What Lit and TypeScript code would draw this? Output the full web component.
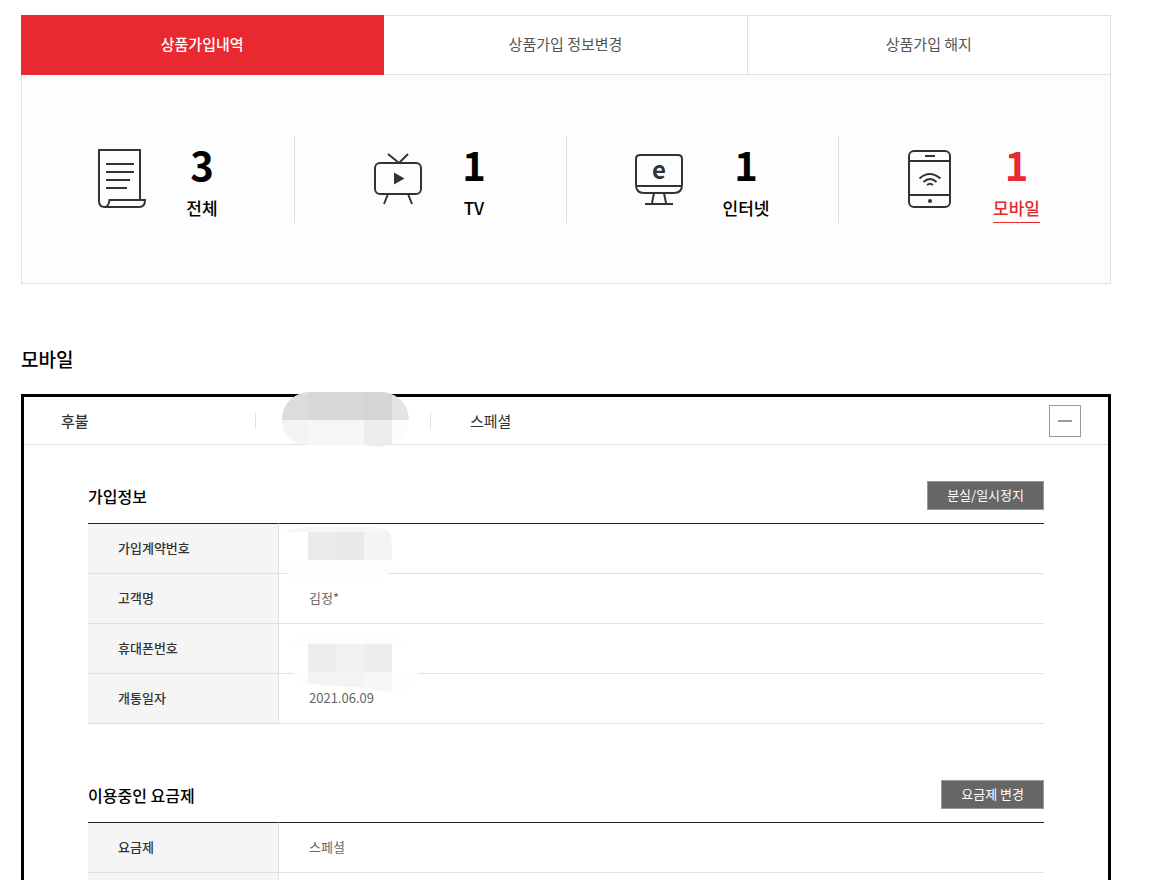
import { LitElement, html, svg, css } from "lit";
import { customElement, state } from "lit/decorators.js";

const docIcon = svg`
  <svg width="48" height="60" viewBox="0 0 48 60" aria-hidden="true">
    <path d="M1 52V1H42V51M1 52C1 56 3.5 58 6.500 58H41C44.500 58 47 55.500 47 51H11.500C11 55 9.500 58 6.500 58"/>
    <path d="M8 15H36M8 23H36M8 31H32M8 39H29"/>
  </svg>`;

const tvIcon = svg`
  <svg width="48" height="52" viewBox="0 0 48 52" aria-hidden="true">
    <rect x="1" y="10" width="46" height="31" rx="5"/>
    <path d="M14 1L25 10L34 1M14 41L10 51M34 41L38 51"/>
    <path class="solid" d="M20 19.500V31.500L30.500 25.500Z"/>
  </svg>`;

const monitorIcon = svg`
  <svg width="48" height="52" viewBox="0 0 48 52" aria-hidden="true">
    <path d="M5 2H43Q47 2 47 6V32Q47 40 39 40H9Q1 40 1 32V6Q1 2 5 2ZM1 33H47M19 40L17 50M29 40L31 50M10 51H38"/>
    <text x="24" y="26" text-anchor="middle">e</text>
  </svg>`;

const phoneIcon = svg`
  <svg width="45" height="58" viewBox="0 0 45 58" aria-hidden="true">
    <rect x="1" y="1" width="41" height="56" rx="5"/>
    <path d="M1 11H42M1 45H42M17 6H27"/>
    <path d="M11.500 28.500Q21.500 19.500 32.500 28.500M15.500 32Q22 26 28.500 32M19 35Q22 32.500 25 35"/>
    <circle class="solid" cx="22" cy="51" r="2"/>
  </svg>`;

@customElement("app-root")
export class AppRoot extends LitElement {
  @state() private tab = 0;
  @state() private open = true;

  private tabs = ["상품가입내역", "상품가입 정보변경", "상품가입 해지"];

  private stats = [
    { icon: docIcon, count: 3, label: "전체" },
    { icon: tvIcon, count: 1, label: "TV" },
    { icon: monitorIcon, count: 1, label: "인터넷" },
    { icon: phoneIcon, count: 1, label: "모바일", active: true },
  ];

  static styles = css`
    :host {
      display: block;
      padding: 15px 41px 0 21px;
      background: #fff;
      color: #000;
      font-family: "Noto Sans CJK KR", "Noto Sans", sans-serif;
      font-size: 15px;
    }
    * { box-sizing: border-box; }
    a { color: inherit; text-decoration: none; }
    button { font-family: inherit; cursor: pointer; }
    h2, h3 { margin: 0; font-weight: 500; }

    .tabs { display: grid; grid-template-columns: repeat(3, 1fr); }
    .tab {
      height: 60px;
      padding: 0 0 2px;
      border: 1px solid #e0e0e0;
      border-left: 0;
      background: #fff;
      color: #555;
      font-size: 15px;
      line-height: 24px;
    }
    .tab.on { border-color: #e8292f; background: #e8292f; color: #fff; font-weight: 500; }

    .stats {
      display: grid;
      grid-template-columns: repeat(4, 1fr);
      padding: 60px 0;
      border: 1px solid #e0e0e0;
      border-top: 0;
      background: #fdfdfd;
    }
    .stat { display: flex; align-items: center; justify-content: center; gap: 40px; }
    .stat + .stat { padding-right: 1px; border-left: 1px solid #e0e0e0; }
    .stat svg { overflow: visible; fill: none; stroke: #333; stroke-width: 2; }
    .stat svg .solid { fill: #333; stroke: none; }
    .stat svg text { fill: #333; stroke: none; font-size: 24px; line-height: 24px; font-weight: 700; }
    .figure { display: flex; flex-direction: column; align-items: center; font-weight: 500; }
    .count { font-size: 40px; font-weight: 700; line-height: 58px; }
    .name { font-size: 17px; line-height: 29px; border-bottom: 1px solid transparent; }
    .active { color: #e8292f; }
    .active .name { border-color: #e8292f; }

    .title { margin: 60px 0 20px; font-size: 19px; line-height: 30px; }
    .card { border: 3px solid #000; }
    .bar {
      display: grid;
      grid-template-columns: 231px 176px 1fr auto;
      align-items: center;
      height: 48px;
      padding-right: 27px;
      border-bottom: 1px solid #e0e0e0;
      color: #333;
      line-height: 24px;
    }
    .kind { padding-left: 37px; font-weight: 500; }
    .number { position: relative; height: 16px; border: solid #e0e0e0; border-width: 0 1px; }
    .plan { padding-left: 39px; }
    .mask { position: absolute; z-index: 1; }
    .mask-number { left: 26px; top: -21px; }
    .mask-contract { left: 0; top: 1px; }
    .mask-phone { left: 12px; top: 6px; }
    .toggle {
      display: grid;
      place-items: center;
      width: 32px;
      height: 32px;
      padding: 0;
      border: 1px solid #999;
      background: #fff;
    }
    .toggle svg { stroke: #999; stroke-width: 2; }

    .body { display: grid; gap: 56px; padding: 36px 64px 40px; }
    .head { display: flex; justify-content: space-between; align-items: center; margin-bottom: 13px; }
    .head h3 { font-size: 16px; line-height: 24px; }
    .action {
      height: 29px;
      padding: 0 19px 2px;
      border: 1px solid #999;
      background: #666;
      color: #fff;
      font-size: 13px;
      line-height: 20px;
    }
    table { width: 100%; border-spacing: 0; table-layout: fixed; font-size: 13px; line-height: 20px; }
    th, td { height: 50px; padding: 0 30px 2px; border-bottom: 1px solid #e0e0e0; text-align: left; }
    th { width: 191px; border-right: 1px solid #e0e0e0; background: #f5f5f5; color: #333; font-weight: 500; }
    td { position: relative; color: #666; font-weight: 400; }
    tr:first-child > * { height: 51px; border-top: 1px solid #222; }
  `;

  private numberMask = svg`
    <svg class="mask mask-number" width="128" height="56" viewBox="0 0 128 56" aria-hidden="true">
      <clipPath id="pill"><path d="M0 28C0 12 12 0 28 0H98C115 0 127 12 127 28C127 42 117 51 104 54C92 56 85 53 75 53H28C12 53 0 44 0 28Z"/></clipPath>
      <g clip-path="url(#pill)">
        <path fill="#dcdcdc" d="M0 0H26V28H0Z"/><path fill="#d8d8d8" d="M26 0H82V28H26Z"/>
        <path fill="#d5d5d5" d="M82 0H110V28H82Z"/><path fill="#e4e4e4" d="M110 0H128V28H110Z"/>
        <path fill="#f4f4f4" d="M0 28H26V56H0Z"/><path fill="#f5f7f7" d="M26 28H82V56H26Z"/>
        <path fill="#ededed" d="M82 28H110V56H82Z"/><path fill="#fcfcfc" d="M110 28H128V56H110Z"/>
      </g>
    </svg>`;

  private contractMask = svg`
    <svg class="mask mask-contract" width="120" height="56" viewBox="0 0 120 56" aria-hidden="true">
      <path fill="#fdfdfd" d="M0 35H119Q115 47 104 51Q96 55 80 55H26Q4 53 0 35Z"/>
      <path fill="#f7f7f7" d="M6 7Q16 2 32 2H92Q106 3 110 7Z"/>
      <path fill="#ebebe9" d="M29 7H57V35H29Z"/><path fill="#e9e9e9" d="M57 7H85V35H57Z"/>
      <path fill="#f4f4f4" d="M85 7H110Q114 12 113 35H85Z"/>
    </svg>`;

  private phoneMask = svg`
    <svg class="mask mask-phone" width="132" height="64" viewBox="0 0 132 64" aria-hidden="true">
      <path fill="#fdfdfd" d="M1 14Q10 1 26 2L90 5Q112 8 120 14Z"/>
      <path fill="#fdfdfd" d="M2 42H128Q120 63 101 62Q60 61 24 57Q6 55 2 42Z"/>
      <path fill="#ededed" d="M17 14H45V42H17Z"/><path fill="#f0f2f2" d="M45 14H73V42H45Z"/>
      <path fill="#ededed" d="M73 14H101V42H73Z"/>
      <path fill="#f3f3f3" d="M17 42H73V57Q50 57 17 53Z"/><path fill="#f6f8f8" d="M73 42H101V62L73 58Z"/>
    </svg>`;

  render() {
    return html`
      <nav class="tabs">
        ${this.tabs.map(
          (label, i) => html`<button class="tab ${i === this.tab ? "on" : ""}" @click=${() => (this.tab = i)}>${label}</button>`
        )}
      </nav>
      <div class="stats">
        ${this.stats.map(
          (s) => html`<a class="stat ${s.active ? "active" : ""}" href="#">
            ${s.icon}
            <span class="figure"><span class="count">${s.count}</span><span class="name">${s.label}</span></span>
          </a>`
        )}
      </div>

      <h2 class="title">모바일</h2>
      <section class="card">
        <div class="bar">
          <span class="kind">후불</span>
          <span class="number">${this.numberMask}</span>
          <span class="plan">스페셜</span>
          <button class="toggle" aria-expanded=${this.open} @click=${() => (this.open = !this.open)}>
            <svg width="14" height="14" viewBox="0 0 14 14" aria-hidden="true">
              <path d=${this.open ? "M0 7H14" : "M0 7H14M7 0V14"} />
            </svg>
          </button>
        </div>
        ${this.open ? this.details() : null}
      </section>
    `;
  }

  private details() {
    return html`
      <div class="body">
        <section>
          <div class="head"><h3>가입정보</h3><button class="action">분실/일시정지</button></div>
          <table>
            <tr><th scope="row">가입계약번호</th><td>${this.contractMask}</td></tr>
            <tr><th scope="row">고객명</th><td>김정*</td></tr>
            <tr><th scope="row">휴대폰번호</th><td>${this.phoneMask}</td></tr>
            <tr><th scope="row">개통일자</th><td>2021.06.09</td></tr>
          </table>
        </section>
        <section>
          <div class="head"><h3>이용중인 요금제</h3><button class="action">요금제 변경</button></div>
          <table>
            <tr><th scope="row">요금제</th><td>스페셜</td></tr>
            <tr><th scope="row"></th><td></td></tr>
          </table>
        </section>
      </div>
    `;
  }
}
